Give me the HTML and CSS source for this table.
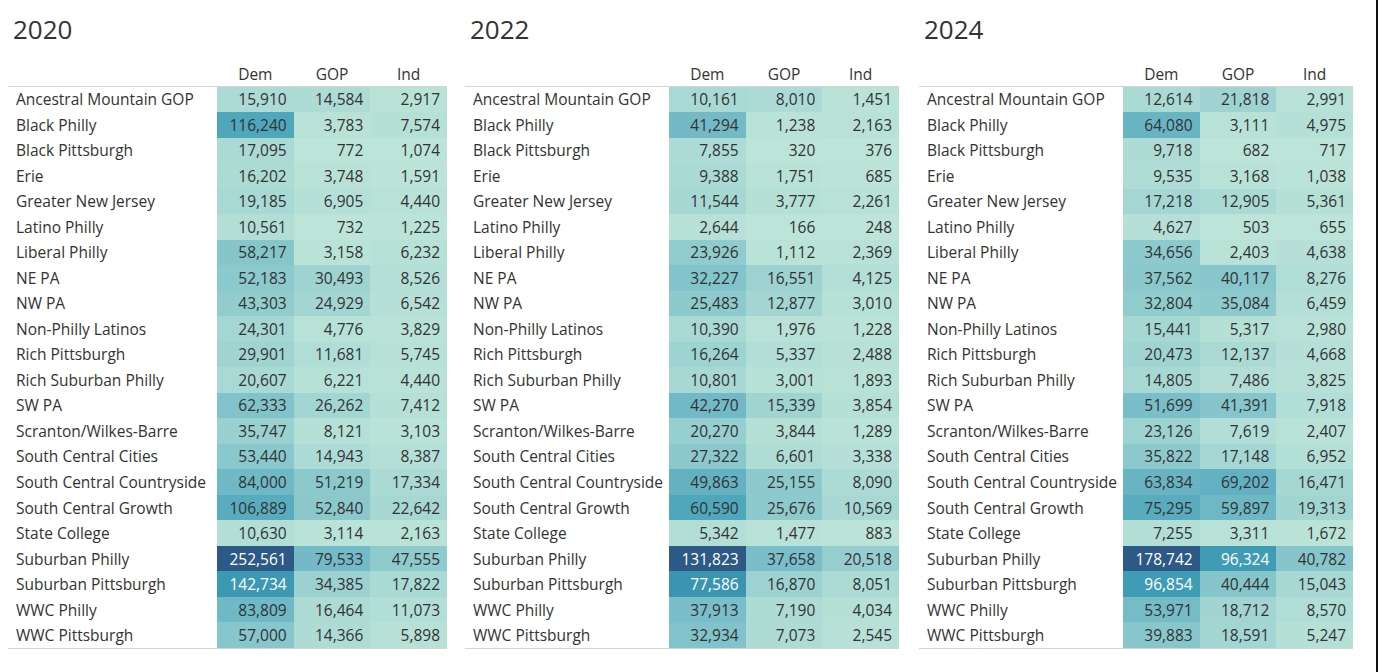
FILE: index.html
```html
<!DOCTYPE html>
<html lang="en">
<head>
<meta charset="utf-8">
<title>Votes by region</title>
<link rel="stylesheet" href="styles.css">
</head>
<body>
<div class="page">
  <section class="panel panel-wide">
    <h2 class="title">2020</h2>
    <table class="grid">
      <colgroup><col class="col-label"><col class="col-num"><col class="col-num"><col class="col-num"></colgroup>
      <thead><tr><th></th><th>Dem</th><th>GOP</th><th>Ind</th></tr></thead>
      <tbody>
        <tr><td class="label">Ancestral Mountain GOP</td><td class="num">15,910</td><td class="num">14,584</td><td class="num">2,917</td></tr>
        <tr><td class="label">Black Philly</td><td class="num">116,240</td><td class="num">3,783</td><td class="num">7,574</td></tr>
        <tr><td class="label">Black Pittsburgh</td><td class="num">17,095</td><td class="num">772</td><td class="num">1,074</td></tr>
        <tr><td class="label">Erie</td><td class="num">16,202</td><td class="num">3,748</td><td class="num">1,591</td></tr>
        <tr><td class="label">Greater New Jersey</td><td class="num">19,185</td><td class="num">6,905</td><td class="num">4,440</td></tr>
        <tr><td class="label">Latino Philly</td><td class="num">10,561</td><td class="num">732</td><td class="num">1,225</td></tr>
        <tr><td class="label">Liberal Philly</td><td class="num">58,217</td><td class="num">3,158</td><td class="num">6,232</td></tr>
        <tr><td class="label">NE PA</td><td class="num">52,183</td><td class="num">30,493</td><td class="num">8,526</td></tr>
        <tr><td class="label">NW PA</td><td class="num">43,303</td><td class="num">24,929</td><td class="num">6,542</td></tr>
        <tr><td class="label">Non-Philly Latinos</td><td class="num">24,301</td><td class="num">4,776</td><td class="num">3,829</td></tr>
        <tr><td class="label">Rich Pittsburgh</td><td class="num">29,901</td><td class="num">11,681</td><td class="num">5,745</td></tr>
        <tr><td class="label">Rich Suburban Philly</td><td class="num">20,607</td><td class="num">6,221</td><td class="num">4,440</td></tr>
        <tr><td class="label">SW PA</td><td class="num">62,333</td><td class="num">26,262</td><td class="num">7,412</td></tr>
        <tr><td class="label">Scranton/Wilkes-Barre</td><td class="num">35,747</td><td class="num">8,121</td><td class="num">3,103</td></tr>
        <tr><td class="label">South Central Cities</td><td class="num">53,440</td><td class="num">14,943</td><td class="num">8,387</td></tr>
        <tr><td class="label">South Central Countryside</td><td class="num">84,000</td><td class="num">51,219</td><td class="num">17,334</td></tr>
        <tr><td class="label">South Central Growth</td><td class="num">106,889</td><td class="num">52,840</td><td class="num">22,642</td></tr>
        <tr><td class="label">State College</td><td class="num">10,630</td><td class="num">3,114</td><td class="num">2,163</td></tr>
        <tr><td class="label">Suburban Philly</td><td class="num">252,561</td><td class="num">79,533</td><td class="num">47,555</td></tr>
        <tr><td class="label">Suburban Pittsburgh</td><td class="num">142,734</td><td class="num">34,385</td><td class="num">17,822</td></tr>
        <tr><td class="label">WWC Philly</td><td class="num">83,809</td><td class="num">16,464</td><td class="num">11,073</td></tr>
        <tr><td class="label">WWC Pittsburgh</td><td class="num">57,000</td><td class="num">14,366</td><td class="num">5,898</td></tr>
      </tbody>
    </table>
  </section>

  <section class="panel panel-mid">
    <h2 class="title">2022</h2>
    <table class="grid">
      <colgroup><col class="col-label"><col class="col-num"><col class="col-num"><col class="col-num"></colgroup>
      <thead><tr><th></th><th>Dem</th><th>GOP</th><th>Ind</th></tr></thead>
      <tbody>
        <tr><td class="label">Ancestral Mountain GOP</td><td class="num">10,161</td><td class="num">8,010</td><td class="num">1,451</td></tr>
        <tr><td class="label">Black Philly</td><td class="num">41,294</td><td class="num">1,238</td><td class="num">2,163</td></tr>
        <tr><td class="label">Black Pittsburgh</td><td class="num">7,855</td><td class="num">320</td><td class="num">376</td></tr>
        <tr><td class="label">Erie</td><td class="num">9,388</td><td class="num">1,751</td><td class="num">685</td></tr>
        <tr><td class="label">Greater New Jersey</td><td class="num">11,544</td><td class="num">3,777</td><td class="num">2,261</td></tr>
        <tr><td class="label">Latino Philly</td><td class="num">2,644</td><td class="num">166</td><td class="num">248</td></tr>
        <tr><td class="label">Liberal Philly</td><td class="num">23,926</td><td class="num">1,112</td><td class="num">2,369</td></tr>
        <tr><td class="label">NE PA</td><td class="num">32,227</td><td class="num">16,551</td><td class="num">4,125</td></tr>
        <tr><td class="label">NW PA</td><td class="num">25,483</td><td class="num">12,877</td><td class="num">3,010</td></tr>
        <tr><td class="label">Non-Philly Latinos</td><td class="num">10,390</td><td class="num">1,976</td><td class="num">1,228</td></tr>
        <tr><td class="label">Rich Pittsburgh</td><td class="num">16,264</td><td class="num">5,337</td><td class="num">2,488</td></tr>
        <tr><td class="label">Rich Suburban Philly</td><td class="num">10,801</td><td class="num">3,001</td><td class="num">1,893</td></tr>
        <tr><td class="label">SW PA</td><td class="num">42,270</td><td class="num">15,339</td><td class="num">3,854</td></tr>
        <tr><td class="label">Scranton/Wilkes-Barre</td><td class="num">20,270</td><td class="num">3,844</td><td class="num">1,289</td></tr>
        <tr><td class="label">South Central Cities</td><td class="num">27,322</td><td class="num">6,601</td><td class="num">3,338</td></tr>
        <tr><td class="label">South Central Countryside</td><td class="num">49,863</td><td class="num">25,155</td><td class="num">8,090</td></tr>
        <tr><td class="label">South Central Growth</td><td class="num">60,590</td><td class="num">25,676</td><td class="num">10,569</td></tr>
        <tr><td class="label">State College</td><td class="num">5,342</td><td class="num">1,477</td><td class="num">883</td></tr>
        <tr><td class="label">Suburban Philly</td><td class="num">131,823</td><td class="num">37,658</td><td class="num">20,518</td></tr>
        <tr><td class="label">Suburban Pittsburgh</td><td class="num">77,586</td><td class="num">16,870</td><td class="num">8,051</td></tr>
        <tr><td class="label">WWC Philly</td><td class="num">37,913</td><td class="num">7,190</td><td class="num">4,034</td></tr>
        <tr><td class="label">WWC Pittsburgh</td><td class="num">32,934</td><td class="num">7,073</td><td class="num">2,545</td></tr>
      </tbody>
    </table>
  </section>

  <section class="panel panel-last">
    <h2 class="title">2024</h2>
    <table class="grid">
      <colgroup><col class="col-label"><col class="col-num"><col class="col-num"><col class="col-num"></colgroup>
      <thead><tr><th></th><th>Dem</th><th>GOP</th><th>Ind</th></tr></thead>
      <tbody>
        <tr><td class="label">Ancestral Mountain GOP</td><td class="num">12,614</td><td class="num">21,818</td><td class="num">2,991</td></tr>
        <tr><td class="label">Black Philly</td><td class="num">64,080</td><td class="num">3,111</td><td class="num">4,975</td></tr>
        <tr><td class="label">Black Pittsburgh</td><td class="num">9,718</td><td class="num">682</td><td class="num">717</td></tr>
        <tr><td class="label">Erie</td><td class="num">9,535</td><td class="num">3,168</td><td class="num">1,038</td></tr>
        <tr><td class="label">Greater New Jersey</td><td class="num">17,218</td><td class="num">12,905</td><td class="num">5,361</td></tr>
        <tr><td class="label">Latino Philly</td><td class="num">4,627</td><td class="num">503</td><td class="num">655</td></tr>
        <tr><td class="label">Liberal Philly</td><td class="num">34,656</td><td class="num">2,403</td><td class="num">4,638</td></tr>
        <tr><td class="label">NE PA</td><td class="num">37,562</td><td class="num">40,117</td><td class="num">8,276</td></tr>
        <tr><td class="label">NW PA</td><td class="num">32,804</td><td class="num">35,084</td><td class="num">6,459</td></tr>
        <tr><td class="label">Non-Philly Latinos</td><td class="num">15,441</td><td class="num">5,317</td><td class="num">2,980</td></tr>
        <tr><td class="label">Rich Pittsburgh</td><td class="num">20,473</td><td class="num">12,137</td><td class="num">4,668</td></tr>
        <tr><td class="label">Rich Suburban Philly</td><td class="num">14,805</td><td class="num">7,486</td><td class="num">3,825</td></tr>
        <tr><td class="label">SW PA</td><td class="num">51,699</td><td class="num">41,391</td><td class="num">7,918</td></tr>
        <tr><td class="label">Scranton/Wilkes-Barre</td><td class="num">23,126</td><td class="num">7,619</td><td class="num">2,407</td></tr>
        <tr><td class="label">South Central Cities</td><td class="num">35,822</td><td class="num">17,148</td><td class="num">6,952</td></tr>
        <tr><td class="label">South Central Countryside</td><td class="num">63,834</td><td class="num">69,202</td><td class="num">16,471</td></tr>
        <tr><td class="label">South Central Growth</td><td class="num">75,295</td><td class="num">59,897</td><td class="num">19,313</td></tr>
        <tr><td class="label">State College</td><td class="num">7,255</td><td class="num">3,311</td><td class="num">1,672</td></tr>
        <tr><td class="label">Suburban Philly</td><td class="num">178,742</td><td class="num">96,324</td><td class="num">40,782</td></tr>
        <tr><td class="label">Suburban Pittsburgh</td><td class="num">96,854</td><td class="num">40,444</td><td class="num">15,043</td></tr>
        <tr><td class="label">WWC Philly</td><td class="num">53,971</td><td class="num">18,712</td><td class="num">8,570</td></tr>
        <tr><td class="label">WWC Pittsburgh</td><td class="num">39,883</td><td class="num">18,591</td><td class="num">5,247</td></tr>
      </tbody>
    </table>
  </section>
</div>
<script src="script.js"></script>
</body>
</html>
```

FILE: styles.css
```css
html, body {
  margin: 0;
  padding: 0;
  background: #ffffff;
}

body {
  font-family: "Open Sans", "Noto Sans", sans-serif;
  color: #333333;
}

.page {
  width: 1378px;
  height: 672px;
  box-sizing: border-box;
  border-right: 2px solid #111111;
  padding-left: 8px;
  display: flex;
  align-items: flex-start;
  overflow: hidden;
}

.panel {
  flex: none;
}

.panel-wide {
  width: 439px;
  margin-right: 18px;
}

.panel-mid {
  width: 434px;
  margin-right: 20px;
}

.panel-last {
  width: 434px;
}

.title {
  margin: 0;
  height: 62px;
  box-sizing: border-box;
  padding: 11px 0 0 5px;
  font-size: 26px;
  line-height: 36px;
  font-weight: 400;
  color: #333333;
}

.grid {
  width: 100%;
  border-collapse: collapse;
  table-layout: fixed;
  font-size: 15.5px;
}

.panel-wide .col-label {
  width: 209px;
}

.panel-mid .col-label,
.panel-last .col-label {
  width: 204px;
}

.grid th {
  height: 23.5px;
  padding: 0;
  font-weight: 400;
  text-align: center;
  vertical-align: middle;
  border-bottom: 1px solid #d4d4d4;
  color: #333333;
}

.grid td {
  height: 25.52px;
  padding: 0 7px 0 0;
  text-align: right;
  vertical-align: middle;
  white-space: nowrap;
  color: #333333;
}

.grid td.label {
  text-align: left;
  padding: 0 0 0 8px;
}

.grid td.num.dark {
  color: #ffffff;
}

.grid tbody tr:last-child td {
  border-bottom: 1px solid #d4d4d4;
}
```

FILE: script.js
```js
(function () {
  var stops = ['#bce4d8', '#aedcd5', '#a1d5d2', '#95cecf', '#89c8cc', '#7ec1ca', '#72bac6',
    '#66b2c2', '#59acbe', '#4ba5ba', '#419eb6', '#3b96b2', '#358ead', '#3586a7', '#347ea1',
    '#32779b', '#316f96', '#2f6790', '#2d608a', '#2c5985'];

  function hex(h) {
    return [parseInt(h.substr(1, 2), 16), parseInt(h.substr(3, 2), 16), parseInt(h.substr(5, 2), 16)];
  }

  function colorAt(f) {
    var pos = Math.max(0, Math.min(1, f)) * (stops.length - 1);
    var i = Math.min(Math.floor(pos), stops.length - 2);
    var k = pos - i;
    var a = hex(stops[i]), b = hex(stops[i + 1]);
    var c = a.map(function (v, j) { return Math.round(v + (b[j] - v) * k); });
    return 'rgb(' + c.join(',') + ')';
  }

  document.querySelectorAll('table.grid').forEach(function (table) {
    var cells = Array.prototype.slice.call(table.querySelectorAll('td.num'));
    var vals = cells.map(function (c) { return Number(c.textContent.replace(/,/g, '')); });
    var min = Math.min.apply(null, vals), max = Math.max.apply(null, vals);
    cells.forEach(function (c, i) {
      var f = (vals[i] - min) / (max - min);
      c.style.backgroundColor = colorAt(f);
      if (f > 0.5) c.classList.add('dark');
    });
  });
})();
```
